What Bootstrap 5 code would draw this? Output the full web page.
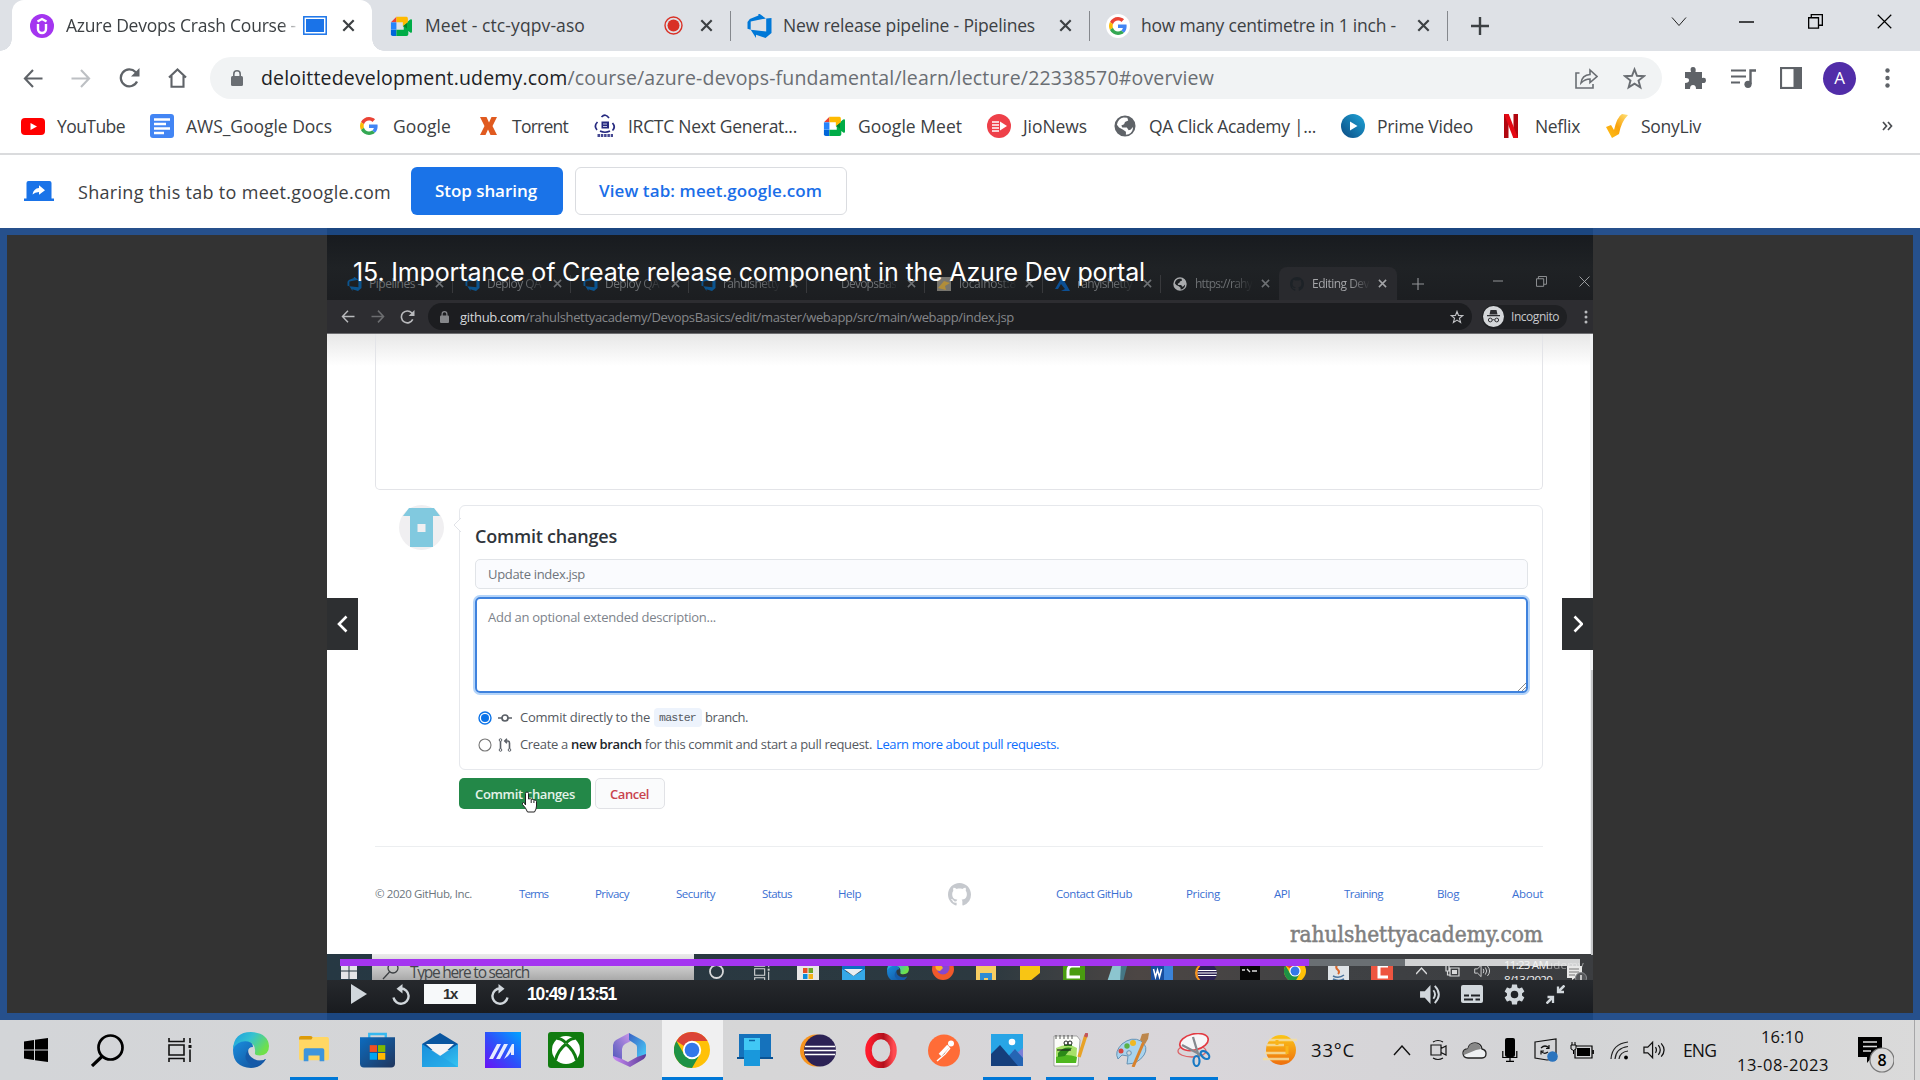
<!DOCTYPE html>
<html lang="en">
<head>
<meta charset="utf-8">
<title>Azure Devops Crash Course</title>
<link href="https://cdn.jsdelivr.net/npm/bootstrap@5.3.0/dist/css/bootstrap.min.css" rel="stylesheet">
<style>
body{width:1920px;height:1080px;overflow:hidden;font-family:"Open Sans","Noto Sans",sans-serif;font-size:17.5px;color:#3c4043;line-height:1.3}
svg{display:block;flex:none}
[data-w]{flex:none}
[data-fit]{white-space:nowrap;display:block}
.bar-row{display:flex;align-items:center;white-space:nowrap}
.tabstrip{height:51px;background:#dee1e6}
.tab-on{height:51px;width:360px;margin-left:12px;padding-left:18px;background:#fff;border-radius:12px 12px 0 0}
.tab-on::before,.tab-on::after{content:"";position:absolute;bottom:0;width:12px;height:12px}
.tab-on::before{left:-12px;background:radial-gradient(circle at 0 0,transparent 11.5px,#fff 12px)}
.tab-on::after{right:-12px;background:radial-gradient(circle at 100% 0,transparent 11.5px,#fff 12px)}
.fade-r{-webkit-mask-image:linear-gradient(90deg,#000 91%,transparent 99%)}
.vsep{border-left:1px solid #85888d;height:30px}
.winbtn{padding-bottom:8px;color:#000}
.toolbar{height:54px;padding-left:23px;color:#5f6368}
.omni{width:1452px;height:42px;border-radius:21px;background:#f1f3f4;padding-left:21px;font-size:19.5px;color:#6a6e73}
.omni b{font-weight:400;color:#202124}
.avatar{width:33px;height:33px;border-radius:50%;background:#512da8;color:#fff;font-size:17px;margin-right:29px}
.marks{height:50px;padding:0 0 6px 21px;border-bottom:2px solid #dadbdd}
.share-row{height:73px;padding:0 0 1px 24px}
.share-row .msg{padding-top:3px;font-size:18px}
.btn-share{height:48px;border-radius:6px;font-size:17px;font-weight:600;padding:0;border:0;line-height:46px}
.btn-stop{width:152px;background:#1a73e8;color:#fff;padding-left:24px}
.btn-view{width:272px;margin-left:12px;background:#fff;border:1px solid #dadce0;color:#1a6ee8;padding-left:23px}
.stage{height:792px;background:#333;border:7px solid #26508c}
.video{width:1266px;height:778px;margin-left:320px;background:#fff}
.vedge{left:0;width:1266px;height:7px;background:#1b4680}
.vedge-t{top:-7px}.vedge-b{top:778px}
.in-tabs{height:65px;padding:32px 0 0 8px;background:linear-gradient(#181b1f,#1f2225 50%,#1c1e21);font-size:12px;color:#77797c}
.in-tab{width:118px;height:33px;padding-left:12px;color:#6d7073}
.in-tab .vsep{border-color:#38393c;height:18px}
.in-fade{-webkit-mask-image:linear-gradient(90deg,#000 55%,transparent 88%)}
.in-on{width:118px;height:33px;padding-left:11px;background:#292a2e;border-radius:8px 8px 0 0;color:#a4a5a8}
.in-bar{height:34px;padding-left:14px;background:#2d2d31;border-bottom:1px solid #6d6d70;color:#b9babd}
.in-omni{width:1044px;height:27px;border-radius:14px;background:#1c1d20;padding:1px 0 0 12px;font-size:13px;color:#85878a}
.in-omni b{font-weight:400;color:#d5d6d8}
.incog{width:85px;height:24px;border-radius:12px;background:#1f2023;font-size:12px;color:#c8c9cc;margin-left:10px;padding-left:1px}
.page-gh{height:620px;background:linear-gradient(#e7e7e7,#fff 32px);padding:0 47px 0 48px;color:#55595f;font-size:13px;border-right:3px solid #f1f2f4}
.editor-end{height:156px;border:1px solid #e3e4e8;border-top:0;border-radius:0 0 5px 5px}
.avatar-row{padding-top:15px}
.cbox{width:1084px;height:265px;border:1px solid #e6e8ec;border-radius:6px;margin-left:15px;padding:17px 14px 0 15px}
.caret{left:-7px;top:12px}
.cbox h3{font-size:18px;font-weight:600;color:#30353b;margin:0;height:36px;line-height:27px}
.inp{height:30px;border:1px solid #e1e4e8;border-radius:5px;background:#fafbfe;padding:1px 0 0 12px;line-height:27px;color:#6f757c}
.txa{height:96px;margin:8px 0 0 0;border:2px solid #3f82dd;box-shadow:0 0 0 2px #b4d4f9;border-radius:5px;padding:10px 0 0 11px;color:#7d838b}
.optrow{height:27px;padding-left:3px}
.opts{padding-top:11px}
.codepill{background:#edf3fc;border-radius:4px;font-family:"Liberation Mono",monospace;font-size:11.5px;height:19px;padding-left:5px;line-height:20px;width:48px;margin-right:3px}
.gbrow{padding:8px 0 0 84px}
.gbtn{height:31px;border-radius:5px;font-size:13px;font-weight:600;padding:0;line-height:30px}
.gb1{width:132px;background:#238848;color:#e4f3e9;padding-left:15px}
.gb2{width:70px;margin-left:4px;background:#fafbfc;border:1px solid #e1e2e6;color:#c9434d;padding-left:14px}
.ghline{border-top:1px solid #eceef0;margin-top:37px}
.ghfoot{height:94px;font-size:11.5px;color:#3a6fd2}
.wm{font-family:"DejaVu Serif Condensed","DejaVu Serif",serif;font-size:22.5px;color:#808080;-webkit-text-stroke:.5px #808080;line-height:30px;margin-left:915px;margin-top:-22px}
.in-task{height:26px;overflow:hidden;background:linear-gradient(90deg,#263843,#2c3940 52%,#4c4644 64%,#3f4144 80%,#3b3d40);padding-left:14px}
.in-task>*{margin-top:9px}
.in-search{width:322px;height:26px;margin-top:0!important;background:linear-gradient(#ececec,#a9a9a9);font-size:15.5px;color:#44474a;padding:11px 0 0 10px}
.prog{left:13px;top:724px;width:1240px;height:7px;background:#d1d2d3}
.prog i{height:7px;display:block}
.p1{width:969px;background:#a435f0}.p2{width:96px;background:#6a6f73}
.ctrl{height:33px;padding:0 0 5px 24px;background:linear-gradient(#26292d,#191b1f);color:#d1d7dc;font-family:"Liberation Sans",sans-serif;font-weight:700}
.speed{width:52px;height:20px;background:#f7f9fa;color:#2d2f31;font-size:15px;padding-left:19px;line-height:20px}
.vtitle{left:26px;top:19px;font-family:"Inter","Liberation Sans",sans-serif;font-size:25px;color:#fff;line-height:36px}
.navb{top:363px;width:31px;height:52px;background:#2d2f31;color:#fff}
.scrollthumb{right:0;top:435px;width:2px;height:285px;background:#c5c6c8}
.hand{left:194px;top:556px}
.ampm{left:1177px;top:722px;width:89px;height:23px;overflow:hidden;color:#f2f2f2;font-size:11.5px;line-height:15px}
.note{left:1240px;top:731px}
.tbar{height:60px;background:linear-gradient(90deg,#d3d5d8,#d6d6d7 40%,#d9d6da 62%,#d3d4d6 82%,#dadada);color:#111}
.cell{width:63px;height:60px;flex:none}
.c62{width:62px}
.cell i{bottom:0;width:48px;height:3px;left:7px;background:#0078d7}
.cell.now{background:#f0f0f1;width:61px;margin:0 1px}.cell.now i{left:0;width:100%}
.temp{font-size:18.5px}
.clock{font-size:16.5px;line-height:28px;padding-top:1px}
.notif{margin-top:10px}
.tedge{border-left:1px solid #a6a6a8;height:60px;width:6px;margin-left:auto}
</style>
</head>
<body>
<svg width="0" height="0" class="position-absolute">
<defs>
<linearGradient id="gEdge" x1="0" y1="0" x2="1" y2=".5"><stop offset="0" stop-color="#1b9de2"/><stop offset=".5" stop-color="#36c2d0"/><stop offset="1" stop-color="#6fe04a"/></linearGradient>
<linearGradient id="gEdge2" x1="0" y1="0" x2="1" y2="1"><stop offset="0" stop-color="#1a8fe0"/><stop offset="1" stop-color="#124b94"/></linearGradient>
<linearGradient id="gStore" x1="0" y1="0" x2="1" y2="1"><stop offset="0" stop-color="#0c6cc0"/><stop offset="1" stop-color="#20355c"/></linearGradient>
<linearGradient id="gMail" x1="0" y1="0" x2="1" y2="1"><stop offset="0" stop-color="#1481d6"/><stop offset="1" stop-color="#35c5f2"/></linearGradient>
<linearGradient id="gAsus" x1="0" y1="1" x2="1" y2="0"><stop offset="0" stop-color="#6a11f5"/><stop offset=".5" stop-color="#2c52fa"/><stop offset="1" stop-color="#00a4ff"/></linearGradient>
<linearGradient id="gPrime" x1="0" y1="1" x2="1" y2="0"><stop offset="0" stop-color="#0b4a82"/><stop offset="1" stop-color="#1fa5d8"/></linearGradient>
<linearGradient id="gSun" x1="0" y1="0" x2="0" y2="1"><stop offset="0" stop-color="#fbc618"/><stop offset="1" stop-color="#ee6e0e"/></linearGradient>
<linearGradient id="gOp" x1="0" y1="0" x2="1" y2="0"><stop offset="0" stop-color="#ff1b2d"/><stop offset=".6" stop-color="#b3101c"/><stop offset="1" stop-color="#ff4a50"/></linearGradient>
<linearGradient id="gSony" x1="0" y1="1" x2="1" y2="0"><stop offset="0" stop-color="#ffc21a"/><stop offset=".5" stop-color="#f9a20a"/><stop offset="1" stop-color="#ffe27a"/></linearGradient>
<linearGradient id="gM1" x1="0" y1="1" x2="1" y2="0"><stop offset="0" stop-color="#4b56b8"/><stop offset="1" stop-color="#d49bee"/></linearGradient>
<linearGradient id="gM2" x1="0" y1="0" x2="1" y2="1"><stop offset="0" stop-color="#3b62c4"/><stop offset="1" stop-color="#49d0fa"/></linearGradient>
<linearGradient id="gM3" x1="0" y1="0" x2="1" y2="0"><stop offset="0" stop-color="#c98bf5"/><stop offset="1" stop-color="#5a3a96"/></linearGradient>
</defs>
<symbol id="meet" viewBox="0 0 24 24"><path fill="#00832d" d="M14 12l5 5 1-5-1-5z"/><path fill="#0066da" d="M1 16v5a2 2 0 0 0 2 2h4v-7z"/><path fill="#e94235" d="M7 2L1 8h6z"/><path fill="#2684fc" d="M1 8h6v8H1z"/><path fill="#00ac47" d="M7 16h8v-4l5 4v5a2 2 0 0 1-2 2H7zM18.500 8L22 5q2-1 2 1v12q0 2-2 1l-3.500-3z"/><path fill="#ffba00" d="M18 2H7v6h7v4l5.500-4V4q0-2-1.500-2z"/></symbol>
<symbol id="goog" viewBox="0 0 48 48"><path fill="#EA4335" d="M24 9.500c3.540 0 6.710 1.220 9.210 3.600l6.850-6.850C35.900 2.380 30.470 0 24 0 14.620 0 6.510 5.380 2.560 13.220l7.980 6.190C12.430 13.720 17.740 9.500 24 9.500z"/><path fill="#4285F4" d="M46.980 24.550c0-1.570-.15-3.090-.38-4.550H24v9.020h12.940c-.58 2.960-2.260 5.480-4.780 7.180l7.730 6c4.510-4.180 7.090-10.360 7.090-17.650z"/><path fill="#FBBC05" d="M10.530 28.590c-.48-1.450-.76-2.990-.76-4.590s.27-3.140.76-4.590l-7.980-6.190C.92 16.460 0 20.120 0 24s.92 7.540 2.560 10.780z"/><path fill="#34A853" d="M24 48c6.480 0 11.930-2.130 15.890-5.810l-7.730-6c-2.150 1.450-4.920 2.300-8.160 2.300-6.260 0-11.570-4.220-13.470-9.910l-7.980 6.190C6.510 42.620 14.620 48 24 48z"/></symbol>
<symbol id="azdo" viewBox="0 0 24 24"><path fill="#0078d7" d="M0 8l2.300-3 8.600-3.500V-1l7.500 5.500L3.200 7.500v8.200L0 14.800zM24 4v15l-6 5-9.500-3.200V24l-5.300-8.300 15.500 1.800V4.500z"/></symbol>
<symbol id="x" viewBox="0 0 12 12"><path d="M1.200 1.200l9.600 9.600M10.800 1.200l-9.600 9.600" stroke="currentColor" stroke-width="2" fill="none"/></symbol>
<symbol id="xt" viewBox="0 0 16 16"><path d="M.8.800l14.400 14.400M15.200.800L.8 15.200" stroke="currentColor" stroke-width="1.300" fill="none"/></symbol>
<symbol id="plus" viewBox="0 0 18 18"><path d="M9 0v18M0 9h18" stroke="currentColor" stroke-width="2.400"/></symbol>
<symbol id="back" viewBox="0 0 20 20"><path d="M10 1L1.500 10l8.500 9M1.500 10H20" stroke="currentColor" stroke-width="2.200" fill="none"/></symbol>
<symbol id="rel" viewBox="0 0 20 20"><path d="M17.500 13.500A8.500 8.500 0 1 1 16 4l2 2" stroke="currentColor" stroke-width="2.300" fill="none"/><path d="M20 0v8.500h-8.500z" fill="currentColor"/></symbol>
<symbol id="lock" viewBox="0 0 12 16"><path fill="currentColor" d="M1.500 6H10.500Q12 6 12 7.500v7Q12 16 10.500 16h-9Q0 16 0 14.500v-7Q0 6 1.500 6z"/><path d="M2.800 7V4a3.200 3.200 0 0 1 6.400 0v3" stroke="currentColor" stroke-width="1.600" fill="none"/></symbol>
<symbol id="star" viewBox="0 0 24 24"><path d="M12 2.500l2.600 6.700 7.200.4-5.600 4.600 1.900 7-6.100-3.900-6.100 3.900 1.900-7-5.600-4.600 7.200-.4z" stroke="currentColor" stroke-width="2" fill="none"/></symbol>
<symbol id="globe" viewBox="0 0 24 24"><path fill="currentColor" fill-rule="evenodd" d="M12 .5a11.500 11.500 0 1 0 0 23a11.500 11.500 0 1 0 0-23zM14.500 3l1 3-3.500 1.500-1 2.500-3 1.500 1 2h5l2 3 2-.5 2.700-3q.3 5.500-4.700 8l-3 .6v-3.300L10 16l-4.500-2.500-2.300-3Q4.500 4 10.500 2.800z"/></symbol>
<symbol id="cat" viewBox="0 0 16 16"><path fill="currentColor" d="M8 0C3.580 0 0 3.580 0 8c0 3.540 2.290 6.530 5.470 7.590.4.070.55-.17.55-.38 0-.19-.01-.82-.01-1.490-2.010.37-2.530-.49-2.690-.94-.09-.23-.48-.94-.82-1.130-.28-.15-.68-.52-.01-.53.63-.01 1.080.58 1.230.82.72 1.210 1.870.87 2.330.66.07-.52.28-.87.51-1.070-1.780-.2-3.640-.89-3.640-3.950 0-.87.31-1.590.82-2.150-.08-.2-.36-1.020.08-2.120 0 0 .67-.21 2.200.82.64-.18 1.320-.27 2-.27s1.360.09 2 .27c1.530-1.040 2.200-.82 2.200-.82.44 1.100.16 1.920.08 2.120.51.56.82 1.270.82 2.150 0 3.070-1.870 3.750-3.650 3.950.29.25.54.73.54 1.480 0 1.070-.01 1.930-.01 2.200 0 .21.15.46.55.38A8.010 8.010 0 0 0 16 8c0-4.420-3.580-8-8-8z"/></symbol>
<symbol id="win" viewBox="0 0 24 24"><path fill="currentColor" d="M0 3.400L10 2v9.400H0zM11 1.800L24 0v11.400H11zM0 12.600h10V22L0 20.600zM11 12.600h13V24l-13-1.800z"/></symbol>
<symbol id="tv" viewBox="0 0 24 24"><path d="M1 0v3.500h15V0M1 24v-3.500h15V24M1 7h15v10H1zM22 0v5M22 11.500V24" stroke="currentColor" stroke-width="1.600" fill="none"/><path fill="currentColor" d="M20.500 7h3v3h-3z"/></symbol>
<symbol id="edge" viewBox="0 0 36 36"><path fill="url(#gEdge2)" d="M0 18Q0 8 10 8q10 0 10 7-5 0-5 5 0 8 10 9 5 0 8-2-5 9-15 9Q0 35 0 18z"/><path fill="url(#gEdge)" d="M0 17Q1 0 18 0q17 1 18 14 0 9-9 9.500-6 0-5-3 1-9-7-11Q5 8 0 17z"/><path fill="#155aa8" d="M15 18q-6 8 2 14 9 5 16-5-6 3-12 0-6-3-6-9z"/></symbol>
<symbol id="chrome" viewBox="0 0 36 36"><circle cx="18" cy="18" r="18" fill="#ffc107"/><path fill="#db4437" d="M2.400 9A18 18 0 0 1 33.600 9H18L10 14z"/><path fill="#1e9245" d="M2.400 9A18 18 0 0 0 18 36l7.800-13.500L18 26l-8-4z"/><circle cx="18" cy="18" r="9.200" fill="#fff"/><circle cx="18" cy="18" r="7.300" fill="#3478e8"/></symbol>
<symbol id="fold" viewBox="0 0 32 30"><path fill="#dd9b07" d="M0 2q0-2 2-2h10q3 0 3 4H0z"/><path fill="#ffd764" d="M0 4h13l2-3h15q2 0 2 2v21q0 2-2 2H2q-2 0-2-2z"/><path fill="#3d95dc" d="M5 15q0-2 2-2h18q2 0 2 2v12h-5v-6h-12v6H5z"/></symbol>
<symbol id="store" viewBox="0 0 36 36"><path d="M9.500 7V1.500h17V7" fill="none" stroke="#37b9f0" stroke-width="2.400"/><path fill="url(#gStore)" d="M0 5h36v27q0 4-4 4H4q-4 0-4-4z"/><path fill="#f25022" d="M10 13h7.500v7H10z"/><path fill="#7fba00" d="M18.500 13H26v7h-7.500z"/><path fill="#00a4ef" d="M10 21h7.500v7H10z"/><path fill="#ffb900" d="M18.500 21H26v7h-7.500z"/></symbol>
<symbol id="mail" viewBox="0 0 36 34"><path fill="#0a56a0" d="M0 11L18 0l18 11v6H0z"/><path fill="#f4f4f6" d="M4 11h28L18 24z"/><path fill="url(#gMail)" d="M0 11l18 12 18-12v23H0z"/><path fill="#1f9fe4" d="M0 11l36 23H0z" opacity=".5"/></symbol>
<symbol id="ecl" viewBox="0 0 36 32"><circle cx="16" cy="16" r="16" fill="#f7941e"/><circle cx="20" cy="16" r="16" fill="#2c2255"/><path d="M5 12h30M4 16h32M5 20h30" stroke="#fff" stroke-width="1.700"/></symbol>
<symbol id="vol" viewBox="0 0 22 20"><path fill="currentColor" d="M0 6.500h5L11 0v20l-6-6.500H0z"/><path d="M14 5.500q3.500 4.500 0 9M15.500 1q8.500 9 0 18" stroke="currentColor" stroke-width="2" fill="none"/></symbol>
<symbol id="vol2" viewBox="0 0 24 20"><path d="M1 7h4l5-5v16l-5-5H1zM13 7q2 3 0 6M16 5q4 5 0 10M19 3q6 7 0 14" stroke="currentColor" stroke-width="1.300" fill="none"/></symbol>
<symbol id="rest" viewBox="0 0 16 16"><path d="M.7 4h10.500v11H.7zM3.500 4V.7h11.800V12h-4" stroke="currentColor" stroke-width="1.400" fill="none"/></symbol>
<symbol id="rot" viewBox="0 0 18 21"><path d="M9 4.500a7.600 7.600 0 1 1-7.500 9" stroke="currentColor" stroke-width="2.400" fill="none"/><path fill="currentColor" d="M10.500 0v9.500L4.500 4.700z"/></symbol>
</svg>

<div class="bar-row tabstrip">
  <div class="bar-row tab-on position-relative">
    <span data-w="36"><svg width="24" height="24" viewBox="0 0 24 24"><circle cx="12" cy="12" r="12" fill="#a435f0"/><path d="M8 10v5a4 4 0 0 0 8 0v-5M7.500 7.500L12 5l4.500 2.500" stroke="#fff" stroke-width="2.400" fill="none"/></svg></span>
    <span data-w="237" class="fade-r" data-fit="230">Azure Devops Crash Course -</span>
    <span data-w="39"><svg width="24" height="19"><rect x=".8" y=".8" width="22.400" height="17.400" fill="#fff" stroke="#1a73e8" stroke-width="1.500"/><rect x="3" y="3" width="18" height="13" fill="#1a73e8"/></svg></span>
    <svg width="13" height="13"><use href="#x"/></svg>
  </div>
  <span data-w="18"></span>
  <span data-w="35"><svg width="22" height="22"><use href="#meet"/></svg></span>
  <span data-w="239" data-fit="160">Meet - ctc-yqpv-aso</span>
  <span data-w="36"><svg width="19" height="19"><circle cx="9.500" cy="9.500" r="8.500" fill="none" stroke="#d93025" stroke-width="1.400"/><circle cx="9.500" cy="9.500" r="6" fill="#d93025"/></svg></span>
  <span data-w="30"><svg width="13" height="13"><use href="#x"/></svg></span>
  <span data-w="17" class="vsep"></span>
  <span data-w="36"><svg width="25" height="24" overflow="visible"><use href="#azdo"/></svg></span>
  <span data-w="276" data-fit="252">New release pipeline - Pipelines</span>
  <span data-w="30"><svg width="13" height="13"><use href="#x"/></svg></span>
  <span data-w="17" class="vsep"></span>
  <span data-w="35"><svg width="24" height="24"><circle cx="12" cy="12" r="12" fill="#fff"/><use href="#goog" x="3" y="3" width="18" height="18"/></svg></span>
  <span data-w="276" data-fit="255">how many centimetre in 1 inch -</span>
  <span data-w="30"><svg width="13" height="13"><use href="#x"/></svg></span>
  <span data-w="24" class="vsep"></span>
  <span data-w="200"><svg width="18" height="18"><use href="#plus"/></svg></span>
  <span data-w="68" class="winbtn"><svg width="16" height="9"><path d="M1 .5l7 8 7-8" stroke="#222" fill="none"/></svg></span>
  <span data-w="69" class="winbtn"><svg width="15" height="2"><path d="M0 1h15" stroke="#000" stroke-width="1.400"/></svg></span>
  <span data-w="69" class="winbtn"><svg width="15" height="15"><use href="#rest"/></svg></span>
  <span data-w="42" class="winbtn"><svg width="15" height="15"><use href="#xt"/></svg></span>
</div>

<div class="bar-row toolbar">
  <span data-w="48"><svg width="20" height="19"><use href="#back"/></svg></span>
  <span data-w="48"><svg width="20" height="19"><g color="#bdc0c4" transform="translate(20 0) scale(-1 1)"><use href="#back"/></g></svg></span>
  <span data-w="49"><svg width="21" height="20"><use href="#rel"/></svg></span>
  <span data-w="42"><svg width="19" height="20" viewBox="0 0 19 20"><path d="M1 9.500L9.500 1.500l8.500 8M3.500 8v10.800h12V8" stroke="currentColor" stroke-width="2.100" fill="none"/></svg></span>
  <div class="bar-row omni">
    <span data-w="30"><svg width="12" height="16"><use href="#lock"/></svg></span>
    <span data-w="1314" data-fit="953"><b>deloittedevelopment.udemy.com</b>/course/azure-devops-fundamental/learn/lecture/22338570#overview</span>
    <span data-w="48"><svg width="23" height="21" viewBox="0 0 23 21"><path d="M4.500 5H1v15h17v-4M6 15Q7 7 15 6.500V2l7 6.500-7 6V11q-5 0-9 4z" stroke="currentColor" stroke-width="1.600" fill="none"/></svg></span>
    <svg width="23" height="23"><use href="#star"/></svg>
  </div>
  <span data-w="22"></span>
  <span data-w="47"><svg width="22" height="22" viewBox="0 0 22 22"><path fill="currentColor" d="M1 5h6q-1.500-5 2-5t2.500 5H18v6q4-1 4 2.200T18 16v6h-6q0-4-3-4t-3 4H1v-6q4 0 4-2.700T1 11z"/></svg></span>
  <span data-w="49"><svg width="25" height="19" viewBox="0 0 25 19"><path d="M0 1.500h15M0 7.500h15M0 13.500h9" stroke="currentColor" stroke-width="2.200"/><path d="M19.500 15V1.500H25" stroke="currentColor" stroke-width="2.400" fill="none"/><circle cx="17" cy="15.300" r="3.600" fill="currentColor"/></svg></span>
  <span data-w="43"><svg width="22" height="22"><rect x="1" y="1" width="20" height="20" fill="#fff" stroke="#5f6368" stroke-width="2.200"/><path fill="#5f6368" d="M13.500 0H22v22h-8.500z"/></svg></span>
  <div class="avatar d-flex align-items-center justify-content-center">A</div>
  <svg width="5" height="20" viewBox="0 0 5 20"><circle cx="2.500" cy="2.500" r="2.200" fill="currentColor"/><circle cx="2.500" cy="10" r="2.200" fill="currentColor"/><circle cx="2.500" cy="17.500" r="2.200" fill="currentColor"/></svg>
</div>

<div class="bar-row marks">
  <span data-w="36"><svg width="24" height="17"><rect width="24" height="17" rx="4" fill="#f00"/><path fill="#fff" d="M9.500 5v7l6.500-3.500z"/></svg></span>
  <span data-w="93" data-fit="68">YouTube</span>
  <span data-w="36"><svg width="24" height="24"><rect width="24" height="24" rx="3" fill="#4285f4"/><path d="M4 5.500h16M4 10h12M4 14.500h16M4 19h10" stroke="#fff" stroke-width="2.300"/></svg></span>
  <span data-w="174" data-fit="146">AWS_Google Docs</span>
  <span data-w="33"><svg width="18" height="18"><use href="#goog"/></svg></span>
  <span data-w="87" data-fit="58">Google</span>
  <span data-w="32"><svg width="17" height="18" viewBox="0 0 17 18"><path fill="#e05a1f" d="M0 0h6.500L9 5.500 11.500 0H17l-4.500 9L17 18h-6.500L8 12.500 5.500 18H0l4.500-9z"/></svg></span>
  <span data-w="82" data-fit="56">Torrent</span>
  <span data-w="34"><svg width="22" height="24" viewBox="0 0 22 24"><path d="M7.500 3q4-4 7.500 1M3.500 8Q-.500 12 3 16M18.500 9q3.500 4 0 7.500M6 17q5 2.500 10 0" stroke="#262a80" stroke-width="1.700" fill="none"/><path fill="#262a80" d="M7.500 7.500h7.500v7H7.500z"/><path d="M9 10h4M9 12.500h4" stroke="#c5c7e0" stroke-width="1"/><path d="M3.500 21.500h15.500" stroke="#262a80" stroke-width="3" stroke-dasharray="2.500 .8" opacity=".85"/></svg></span>
  <span data-w="195" data-fit="169">IRCTC Next Generat...</span>
  <span data-w="35"><svg width="22" height="22"><use href="#meet"/></svg></span>
  <span data-w="129" data-fit="104">Google Meet</span>
  <span data-w="36"><svg width="24" height="24"><circle cx="12" cy="12" r="12" fill="#ee4049"/><path d="M5 8h7M5 11h7M5 14h7M5 17h7" stroke="#fff" stroke-width="1.600"/><path fill="#fff" d="M13 7.500v9l7-4.500z"/></svg></span>
  <span data-w="91" data-fit="64">JioNews</span>
  <span data-w="35"><svg width="22" height="22" color="#5f6368"><use href="#globe"/></svg></span>
  <span data-w="192" data-fit="167">QA Click Academy |...</span>
  <span data-w="36"><svg width="24" height="24"><circle cx="12" cy="12" r="12" fill="url(#gPrime)"/><path fill="#fff" d="M9 7.500v9l7.500-4.500z"/></svg></span>
  <span data-w="127" data-fit="96">Prime Video</span>
  <span data-w="31"><svg width="14" height="24"><path fill="#b1060f" d="M0 0h4.500v24H0zM9.500 0H14v24H9.500z"/><path fill="#e50914" d="M0 0h4.700L14 24H9.300z"/></svg></span>
  <span data-w="71" data-fit="45">Neflix</span>
  <span data-w="35"><svg width="22" height="24" viewBox="0 0 22 24"><path fill="url(#gSony)" d="M0 13l5-2 3 5Q11 3 16 0l6 1Q15 8 13 20l-7 4z"/></svg></span>
  <span data-w="241" data-fit="60">SonyLiv</span>
  <svg width="11" height="10"><path d="M1 1l3.500 4L1 9M6 1l3.500 4L6 9" stroke="#4a4d51" stroke-width="1.700" fill="none"/></svg>
</div>

<div class="bar-row share-row">
  <span data-w="54"><svg width="30" height="20"><path fill="#1a73e8" d="M4.500 0h21q2 0 2 2v15.500H30V20H0v-2.500h2.500V2q0-2 2-2z"/><path fill="#fff" d="M8.500 13.500Q9.500 7.500 15 7V4.200l6 5-6 4.500V11q-4 0-6.500 2.500z"/></svg></span>
  <span data-w="333" data-fit="313" class="msg">Sharing this tab to meet.google.com</span>
  <button class="btn btn-share btn-stop text-start"><span data-fit="102">Stop sharing</span></button>
  <button class="btn btn-share btn-view text-start"><span data-fit="223">View tab: meet.google.com</span></button>
</div>

<div class="stage">
  <div class="video position-relative">
    <div class="bar-row in-tabs">
      <div class="bar-row in-tab"><span data-w="22"><svg width="15" height="14" overflow="visible" opacity=".6"><use href="#azdo"/></svg></span><span data-w="66" data-fit="52">Pipelines -</span><span data-w="17"><svg width="9" height="9"><use href="#x"/></svg></span><span class="vsep"></span></div>
      <div class="bar-row in-tab"><span data-w="22"><svg width="15" height="14" overflow="visible" opacity=".6"><use href="#azdo"/></svg></span><span data-w="66" data-fit="54" class="in-fade">Deploy QA</span><span data-w="17"><svg width="9" height="9"><use href="#x"/></svg></span><span class="vsep"></span></div>
      <div class="bar-row in-tab"><span data-w="22"><svg width="15" height="14" overflow="visible" opacity=".6"><use href="#azdo"/></svg></span><span data-w="66" data-fit="54" class="in-fade">Deploy QA</span><span data-w="17"><svg width="9" height="9"><use href="#x"/></svg></span><span class="vsep"></span></div>
      <div class="bar-row in-tab"><span data-w="22"><svg width="15" height="14" overflow="visible" opacity=".6"><use href="#azdo"/></svg></span><span data-w="66" data-fit="57" class="in-fade">rahulshetty</span><span data-w="17"><svg width="9" height="9"><use href="#x"/></svg></span><span class="vsep"></span></div>
      <div class="bar-row in-tab"><span data-w="22"></span><span data-w="66" data-fit="55" class="in-fade">DevopsBas</span><span data-w="17"><svg width="9" height="9"><use href="#x"/></svg></span><span class="vsep"></span></div>
      <div class="bar-row in-tab"><span data-w="22"><svg width="14" height="14"><rect width="14" height="14" fill="#77756e"/><path fill="#b08d3a" d="M1 11l6-7 6 2-5 3 1 4z"/></svg></span><span data-w="66" data-fit="57" class="in-fade">localhost:8</span><span data-w="17"><svg width="9" height="9"><use href="#x"/></svg></span><span class="vsep"></span></div>
      <div class="bar-row in-tab"><span data-w="22"><svg width="15" height="14"><path fill="#0c4f93" d="M0 12L7 0l8 14H6l4-2-4-5-3 5z"/></svg></span><span data-w="66" data-fit="55" class="in-fade">rahylshetty</span><span data-w="17"><svg width="9" height="9"><use href="#x"/></svg></span><span class="vsep"></span></div>
      <div class="bar-row in-tab"><span data-w="22"><svg width="14" height="14" color="#a9abad"><use href="#globe"/></svg></span><span data-w="66" data-fit="57" class="in-fade">https://rahy</span><svg width="9" height="9"><use href="#x"/></svg></div>
      <div class="bar-row in-on"><span data-w="22"><svg width="14" height="14" color="#1d2227"><use href="#cat"/></svg></span><span data-w="66" data-fit="57" class="in-fade">Editing Dev</span><svg width="9" height="9"><use href="#x"/></svg></div>
      <span data-w="15"></span>
      <span data-w="81"><svg width="12" height="12" viewBox="0 0 18 18"><path d="M9 0v18M0 9h18" stroke="#929497" stroke-width="1.700"/></svg></span>
      <span data-w="43"><svg width="10" height="7"><path d="M0 1h10" stroke="#929497"/></svg></span>
      <span data-w="43"><svg width="11" height="16"><g color="#929497"><use href="#rest" width="11" height="11"/></g></svg></span>
      <svg width="11" height="16"><g color="#a9abad"><use href="#xt" width="11" height="11"/></g></svg>
    </div>
    <div class="bar-row in-bar">
      <span data-w="30"><svg width="14" height="13"><use href="#back"/></svg></span>
      <span data-w="29"><svg width="14" height="13" viewBox="0 0 20 20"><path d="M10 1l8.500 9-8.500 9M18.500 10H0" stroke="#6c6d70" stroke-width="2.400" fill="none"/></svg></span>
      <span data-w="28"><svg width="15" height="14"><use href="#rel"/></svg></span>
      <div class="bar-row in-omni">
        <span data-w="20"><svg width="9" height="12"><use href="#lock"/></svg></span>
        <span data-w="990" data-fit="554"><b>github.com</b>/rahulshettyacademy/DevopsBasics/edit/master/webapp/src/main/webapp/index.jsp</span>
        <svg width="14" height="14" color="#c0c1c4"><use href="#star"/></svg>
      </div>
      <div class="bar-row incog"><span data-w="28"><svg width="21" height="21"><circle cx="10.500" cy="10.500" r="10.500" fill="#d5d7da"/><path fill="#2d2d31" d="M7.500 4h6l1 4.500h-8zM4 9h13v1.300H4z"/><path d="M9.300 14q1.200-.8 2.400 0" stroke="#2d2d31" fill="none"/><circle cx="7.300" cy="14" r="1.900" fill="none" stroke="#2d2d31"/><circle cx="13.700" cy="14" r="1.900" fill="none" stroke="#2d2d31"/></svg></span><span data-fit="48">Incognito</span></div>
      <span data-w="17"></span>
      <svg width="4" height="14"><circle cx="2" cy="2" r="1.500" fill="#b9babd"/><circle cx="2" cy="7" r="1.500" fill="#b9babd"/><circle cx="2" cy="12" r="1.500" fill="#b9babd"/></svg>
    </div>
    <div class="page-gh">
      <div class="editor-end"></div>
      <div class="d-flex avatar-row">
        <span data-w="24"></span>
        <svg width="45" height="45" viewBox="0 0 45 45"><circle cx="22.500" cy="22.500" r="22.500" fill="#f0eff1"/><path fill="#81c9df" d="M10 3h25l6 8h-7v31H11V11H4z"/><path fill="#f0eff1" d="M18.500 19h8v8h-8z"/></svg>
        <div class="cbox position-relative">
          <svg class="caret position-absolute" width="8" height="14"><path d="M8 0L1 7l7 7" fill="#fff" stroke="#e1e3e8"/></svg>
          <h3><span class="d-inline-block" data-fit="142">Commit changes</span></h3>
          <div class="inp"><span data-fit="97">Update index.jsp</span></div>
          <div class="txa position-relative"><span data-fit="228">Add an optional extended description...</span><svg class="position-absolute bottom-0 end-0" width="9" height="9"><path d="M1 9l8-8M5 9l4-4" stroke="#888"/></svg></div>
          <div class="opts">
          <div class="bar-row optrow">
            <span data-w="20"><svg width="14" height="14"><circle cx="7" cy="7" r="6" fill="#fff" stroke="#0b73e8" stroke-width="1.400"/><circle cx="7" cy="7" r="4" fill="#0b73e8"/></svg></span>
            <span data-w="22"><svg width="14" height="10"><circle cx="7" cy="5" r="3" fill="none" stroke="#5b6067" stroke-width="1.700"/><path d="M0 5h4M10 5h4" stroke="#5b6067" stroke-width="1.700"/></svg></span>
            <span data-w="134" data-fit="130">Commit directly to the</span>
            <span class="codepill"><span data-fit="37">master</span></span>
            <span data-fit="43">branch.</span>
          </div>
          <div class="bar-row optrow">
            <span data-w="20"><svg width="14" height="14"><circle cx="7" cy="7" r="6" fill="#fff" stroke="#777" stroke-width="1.100"/></svg></span>
            <span data-w="22"><svg width="14" height="14" viewBox="0 0 14 14"><path d="M2.500 3v8M11.500 11V5q0-2-2-2H7M9 .8L6.800 3 9 5.200" stroke="#5b6067" stroke-width="1.600" fill="none"/><circle cx="2.500" cy="2" r="1.300" fill="#fff" stroke="#5b6067"/><circle cx="2.500" cy="12" r="1.300" fill="#fff" stroke="#5b6067"/><circle cx="11.500" cy="12" r="1.300" fill="#fff" stroke="#5b6067"/></svg></span>
            <span data-w="356" data-fit="352">Create a <span class="fw-semibold text-dark">new branch</span> for this commit and start a pull request.</span>
            <span class="text-primary" data-fit="183">Learn more about pull requests.</span>
          </div>
          </div>
        </div>
      </div>
      <div class="d-flex gbrow">
        <button class="btn gbtn gb1 text-start"><span data-fit="100">Commit changes</span></button>
        <button class="btn gbtn gb2 text-start"><span data-fit="39">Cancel</span></button>
      </div>
      <div class="ghline"></div>
      <div class="bar-row ghfoot">
        <span data-w="144" data-fit="97" class="text-secondary">© 2020 GitHub, Inc.</span>
        <span data-w="76" data-fit="29">Terms</span><span data-w="81" data-fit="34">Privacy</span><span data-w="86" data-fit="39">Security</span><span data-w="76" data-fit="30">Status</span><span data-w="110" data-fit="23">Help</span>
        <span data-w="108"><svg width="23" height="23" color="#c6c9ce"><use href="#cat"/></svg></span>
        <span data-w="130" data-fit="76">Contact GitHub</span><span data-w="88" data-fit="34">Pricing</span><span data-w="70" data-fit="16">API</span><span data-w="93" data-fit="39">Training</span><span data-w="75" data-fit="22">Blog</span><span data-w="31" data-fit="31">About</span>
      </div>
      <div class="wm"><span data-fit="253">rahulshettyacademy.com</span></div>
    </div>
    <div class="d-flex in-task">
      <span data-w="31"><svg width="16" height="16" color="#e4e6e8" viewBox="0 0 16 16"><path fill="currentColor" d="M0 0h7.500v7.500H0zM8.500 0H16v7.500H8.500zM0 8.500h7.500V16H0zM8.500 8.500H16V16H8.500z"/></svg></span>
      <div class="d-flex in-search"><span data-w="28"><svg width="17" height="16" viewBox="0 0 17 16" overflow="visible"><circle cx="11" cy="3" r="5" fill="none" stroke="#3c3f42" stroke-width="1.300"/><path d="M7.500 7L1 14" stroke="#3c3f42" stroke-width="1.300"/></svg></span><span data-fit="119" class="lh-1">Type here to search</span></div>
      <span data-w="15"></span>
      <span data-w="45"><svg width="15" height="17"><circle cx="7.500" cy="8.500" r="6.500" fill="none" stroke="#d8d9da" stroke-width="1.800"/></svg></span>
      <span data-w="43"><svg width="16" height="18" color="#d8d9da"><use href="#tv"/></svg></span>
      <span data-w="45"><svg width="22" height="18"><path fill="#e7e7e7" d="M0 3h22v15H0z"/><path fill="#e34f26" d="M6 5h4.500v5H6z"/><path fill="#6aa52a" d="M11.500 5H16v5h-4.500z"/><path fill="#0a8bdb" d="M6 11h4.500v5H6z"/><path fill="#f2b118" d="M11.500 11H16v5h-4.500z"/></svg></span>
      <span data-w="45"><svg width="23" height="19"><path fill="#0c6fc0" d="M0 2h23v6H0z"/><path fill="#35a9e8" d="M0 6l11.500 7L23 6v13H0z"/><path fill="#e9eef2" d="M2 6h19l-9.500 7z"/></svg></span>
      <span data-w="45"><svg width="22" height="22"><use href="#edge" y="-3"/></svg></span>
      <span data-w="44"><svg width="22" height="22"><circle cx="11" cy="6" r="11" fill="#f0592b"/><circle cx="11" cy="5" r="6.500" fill="#8548d0"/><path fill="#fbb02a" d="M4 0q4 0 7 5l-3 3q-6 0-4-8z"/></svg></span>
      <span data-w="44"><svg width="20" height="20"><path fill="#f6cd63" d="M0 2h20v18H0z"/><path fill="#2f8bd2" d="M4 10h12v10h-4v-5H8v5H4z"/></svg></span>
      <span data-w="43"><svg width="20" height="19"><path fill="#f8c514" d="M0 0h20v19H0z"/><path fill="#3b3a36" d="M10 18l10-8v9H10z"/></svg></span>
      <span data-w="44"><svg width="22" height="19"><path fill="#499c10" d="M0 0h22v19H0z"/><path d="M17 3H9Q5 3 5 8v6h12" stroke="#fff" stroke-width="3" fill="none"/></svg></span>
      <span data-w="44"><svg width="22" height="19"><path fill="#8cc5cf" d="M6 1h14l-6 18H0z"/><path fill="#457785" d="M14 1l6 2-4 16h-3z"/></svg></span>
      <span data-w="44"><svg width="22" height="19"><path fill="#3b83d8" d="M5 0h17v19H5z"/><path fill="#184e9e" d="M0 3h13v14H0z"/><path d="M2.500 6l2 8 2-7 2 7 2-8" stroke="#fff" stroke-width="1.500" fill="none"/></svg></span>
      <span data-w="45"><svg width="22" height="20"><use href="#ecl"/></svg></span>
      <span data-w="44"><svg width="20" height="19"><path fill="#060606" d="M0 2h20v17H0z"/><path d="M2 7h3M7 6l3 3M12 8h5" stroke="#ddd" stroke-width="1.400"/></svg></span>
      <span data-w="44"><svg width="22" height="22"><use href="#chrome" y="-3"/></svg></span>
      <span data-w="43"><svg width="21" height="19"><path fill="#dfe4e8" d="M0 0h21v19H0z"/><path d="M11 0q-5 4-1 7 2 2 0 4" stroke="#d8662a" stroke-width="2" fill="none"/><path d="M5 13q6 3 11-1M5 16q6 3 11 0" stroke="#47719b" stroke-width="1.600" fill="none"/></svg></span>
      <span data-w="45"><svg width="22" height="19"><path fill="#ee5540" d="M0 0h22v19H0z"/><path d="M17 3H8v11h9" stroke="#fff" stroke-width="3" fill="none"/></svg></span>
      <span data-w="29"><svg width="11" height="16"><path d="M0 11l5.500-6L11 11" stroke="#d8d9da" stroke-width="1.500" fill="none"/></svg></span>
      <span data-w="29"><svg width="15" height="15"><path d="M5 5h9v8H5zM1 3v5h3V3M2.500 8v4H5" stroke="#d8d9da" stroke-width="1.200" fill="none"/><path fill="#d8d9da" d="M7 7h5v4H7z"/></svg></span>
      <svg width="17" height="16" color="#d8d9da"><use href="#vol2"/></svg>
    </div>
    <div class="bar-row ctrl">
      <span data-w="41"><svg width="16" height="20"><path fill="currentColor" d="M0 0l16 10L0 20z"/></svg></span>
      <span data-w="32"><svg width="18" height="21"><use href="#rot"/></svg></span>
      <span class="speed"><span data-fit="14">1x</span></span>
      <span data-w="15"></span>
      <span data-w="36"><svg width="18" height="21"><g transform="translate(18 0) scale(-1 1)"><use href="#rot"/></g></svg></span>
      <span data-w="893" data-fit="89" class="text-white">10:49 / 13:51</span>
      <span data-w="41"><svg width="21" height="19"><use href="#vol"/></svg></span>
      <span data-w="43"><svg width="22" height="18"><rect width="22" height="18" rx="2" fill="currentColor"/><path d="M3 10.500h5M10 10.500h9M3 14.500h9M14.500 14.500H19" stroke="#202327" stroke-width="1.800"/></svg></span>
      <span data-w="42"><svg width="21" height="21" viewBox="2 2 20 20"><path fill="currentColor" d="M19.140 12.940c.04-.3.060-.61.060-.94s-.02-.64-.07-.94l2.030-1.580c.18-.14.23-.41.12-.61l-1.920-3.320c-.12-.22-.37-.29-.59-.22l-2.390.96c-.5-.38-1.030-.7-1.620-.94L14.400 2.810a.48.480 0 0 0-.48-.41h-3.840c-.24 0-.43.17-.47.41L9.250 5.350c-.59.24-1.130.57-1.620.94l-2.390-.96c-.22-.08-.47 0-.59.22L2.740 8.870c-.12.21-.08.47.12.610l2.030 1.580c-.05.3-.09.63-.09.94s.02.64.07.94l-2.030 1.580c-.18.14-.23.41-.12.61l1.920 3.320c.12.22.37.29.59.22l2.390-.96c.5.38 1.030.7 1.620.94l.36 2.540c.05.24.24.41.48.41h3.840c.24 0 .44-.17.47-.41l.36-2.540c.59-.24 1.130-.56 1.620-.94l2.390.96c.22.080.47 0 .59-.22l1.920-3.320c.12-.22.070-.47-.12-.61zM12 15.600A3.600 3.600 0 1 1 12 8.400a3.600 3.600 0 0 1 0 7.200z"/></svg></span>
      <svg width="19" height="19"><path d="M18.500.5l-6 6M.5 18.500l6-6" stroke="currentColor" stroke-width="2.600"/><path d="M12 1.500V7h6M1.500 12H7v6" stroke="currentColor" stroke-width="2.300" fill="none"/></svg>
    </div>
    <div class="prog position-absolute d-flex"><i class="p1"></i><i class="p2"></i></div>
    <div class="ampm position-absolute"><div class="d-flex"><span data-w="42" data-fit="44">11:23 AM</span><span class="opacity-50" data-fit="38">udemy</span></div><span data-fit="48">8/13/2020</span></div>
    <svg class="note position-absolute" width="22" height="14"><path fill="#e8e8e8" d="M0 0h15v12H8l-3 2v-2H0z"/><path d="M2 3h10M2 6h10M2 9h6" stroke="#777"/><circle cx="14" cy="12" r="5.500" fill="#55575a" stroke="#8a8c8f"/><path d="M14 9v5" stroke="#fff" stroke-width="1.300"/></svg>
    <div class="vtitle position-absolute"><span data-fit="792">15. Importance of Create release component in the Azure Dev portal</span></div>
    <div class="navb position-absolute start-0 d-flex align-items-center justify-content-center"><svg width="14" height="18"><path d="M10.500 1.500L3 9l7.500 7.500" stroke="#fff" stroke-width="2.600" fill="none"/></svg></div>
    <div class="navb position-absolute end-0 d-flex align-items-center justify-content-center"><svg width="10" height="18"><path d="M1.500 1.500L9 9l-7.500 7.500" stroke="#fff" stroke-width="2.600" fill="none"/></svg></div>
    <div class="scrollthumb position-absolute"></div>
    <svg class="hand position-absolute" width="17" height="22" viewBox="0 0 17 22"><path fill="#fff" stroke="#222" d="M4.500 14V2.500Q4.500 1 6 1t1.500 1.500V8q2-1 2.800.5 2-.8 2.600.6 2.300-.6 2.600 1.400V15q0 3-2 6H6.500Q5 17 1.500 13.500 1 11.500 2.500 11.500q1 0 2 2.500z"/><path d="M10.200 9v3M12.900 9.500V12" stroke="#222"/></svg>
    <div class="vedge vedge-t position-absolute"></div><div class="vedge vedge-b position-absolute"></div>
  </div>
</div>

<div class="bar-row tbar">
  <span data-w="24"></span>
  <span data-w="67"><svg width="24" height="24" color="#000"><use href="#win"/></svg></span>
  <span data-w="77"><svg width="33" height="33" viewBox="0 0 33 33"><circle cx="19.500" cy="13.500" r="12" fill="none" stroke="#000" stroke-width="2.700"/><path d="M11 22.500L1 32" stroke="#000" stroke-width="3.200"/></svg></span>
  <span data-w="51.500"><svg width="24" height="24" color="#111"><use href="#tv"/></svg></span>
  <div class="cell d-flex align-items-center justify-content-center"><svg width="36" height="36"><use href="#edge"/></svg></div>
  <div class="cell position-relative d-flex align-items-center justify-content-center"><svg width="32" height="28"><use href="#fold"/></svg><i class="position-absolute"></i></div>
  <div class="cell d-flex align-items-center justify-content-center"><svg width="35" height="36"><use href="#store"/></svg></div>
  <div class="cell d-flex align-items-center justify-content-center"><svg width="36" height="34"><use href="#mail"/></svg></div>
  <div class="cell d-flex align-items-center justify-content-center"><svg width="36" height="36"><rect width="36" height="36" fill="url(#gAsus)"/><path d="M4 27l8-15h4L8 27zM11 27l8-15h4l-8 15zM19 27l8-15h2v11h-3v-3l-3 4z" fill="#e6ecff"/></svg></div>
  <div class="cell d-flex align-items-center justify-content-center"><svg width="36" height="36"><rect width="36" height="36" rx="3" fill="#107c10"/><circle cx="18" cy="18" r="14" fill="#fff"/><path d="M18 11q-5-5-9-4.500M18 11q5-5 9-4.500M18 12Q10 18 7.500 28M18 12q8 6 10.500 16" stroke="#107c10" stroke-width="3" fill="none"/></svg></div>
  <div class="cell d-flex align-items-center justify-content-center"><svg width="33" height="34" viewBox="0 0 33 34"><path fill="url(#gM1)" d="M16 0L3 7Q0 9 0 12v12l9 5V16q0-3 3-5l8-4z"/><path fill="url(#gM2)" d="M16 0l13 7q4 2 4 6v10l-9 3V14q0-2-2-3l-6-4z"/><path fill="url(#gM3)" d="M0 23l9 3 6 3 9-5 9-3q0 4-4 6L17 34 4 28q-4-2-4-5z"/></svg></div>
  <div class="cell now position-relative d-flex align-items-center justify-content-center"><svg width="36" height="36"><use href="#chrome"/></svg><i class="position-absolute"></i></div>
  <div class="cell d-flex align-items-center justify-content-center"><svg width="36" height="32" viewBox="0 0 36 32"><path fill="#1572bc" d="M2 0h32v24H2z"/><path fill="#0b5394" d="M0 23h36v2H0z"/><path fill="#1998dc" d="M7 4h16v28H7z"/><path fill="#41c8f5" d="M7 4h16v12H7z"/><path d="M12 6.500h6" stroke="#0b65a6" stroke-width="1.500"/></svg></div>
  <div class="cell d-flex align-items-center justify-content-center"><svg width="36" height="33"><use href="#ecl"/></svg></div>
  <div class="cell d-flex align-items-center justify-content-center"><svg width="34" height="35"><ellipse cx="17" cy="17.500" rx="12.500" ry="14.500" fill="none" stroke="url(#gOp)" stroke-width="6.500"/></svg></div>
  <div class="cell d-flex align-items-center justify-content-center"><svg width="32" height="33"><circle cx="16" cy="16.500" r="16" fill="#ff6c37"/><circle cx="23" cy="9.500" r="3" fill="#fff"/><path d="M20.500 12L12 21" stroke="#fff" stroke-width="3.600"/><path d="M22 14l-5 6-8 7" stroke="#fff" stroke-width="1.500"/></svg></div>
  <div class="cell position-relative d-flex align-items-center justify-content-center"><svg width="32" height="32"><path fill="#28a5e6" d="M0 0h32v32H0z"/><path fill="#7a80d8" d="M32 14v18H18l4-16 5 2z"/><path fill="#2565b4" d="M14 26l10-11 8 9v8H14z"/><path fill="#153f7c" d="M0 20l9-9 18 21H0z"/><circle cx="21" cy="8" r="3.300" fill="#fff"/></svg><i class="position-absolute"></i></div>
  <div class="cell c62 position-relative d-flex align-items-center justify-content-center"><svg width="36" height="34" viewBox="0 0 36 34"><path fill="#fbfcf8" stroke="#888" stroke-width=".7" d="M2 3h23l3 4-2 26H2z"/><path fill="#a8e06a" d="M4 15q12-6 21 0l-1 15H4z"/><path fill="#4fb81f" d="M4 24q10-4 21 0l-1 6H4z"/><path fill="#2b8a17" d="M6 20q6-7 14-5l-4 4-3 4-7 1zM12 9h8v4h-8z"/><circle cx="14" cy="10" r="2" fill="#fff" stroke="#222"/><circle cx="18" cy="10" r="2" fill="#fff" stroke="#222"/><path d="M5 17h14" stroke="#222" stroke-width="1.200"/><path d="M4 2v4M8 2v4M12 2v4M16 2v4M20 2v4" stroke="#555"/><path d="M34 2l-7 22" stroke="#e8a226" stroke-width="3.400"/><path d="M35 0l-1.300 4" stroke="#c2565e" stroke-width="3.400"/></svg><i class="position-absolute"></i></div>
  <div class="cell c62 position-relative d-flex align-items-center justify-content-center"><svg width="36" height="34" viewBox="0 0 36 34"><path fill="#a9d3ee" stroke="#6593b5" d="M8 11Q18 3 27 8q8 6 3 14-6 9-17 9l1-8-6-1-4 4Q0 19 8 11z"/><circle cx="7" cy="18" r="2.500" fill="#d9463e"/><circle cx="13" cy="13" r="2.700" fill="#58b146"/><circle cx="19" cy="10" r="3" fill="#efb823"/><circle cx="15" cy="20" r="2.300" fill="#d4d6d8" stroke="#6593b5"/><path d="M31 6L19 34" stroke="#d8812b" stroke-width="3"/><path fill="#bd874c" d="M28 1l7-1-1 6-3 5-5-4z"/></svg><i class="position-absolute"></i></div>
  <div class="cell c62 position-relative d-flex align-items-center justify-content-center"><svg width="34" height="34" viewBox="0 0 34 34"><ellipse cx="15" cy="18" rx="14" ry="6" fill="none" stroke="#dc6468" stroke-width="1.300"/><ellipse cx="17" cy="9" rx="14.500" ry="8" fill="#f6f6f8" stroke="#e23a42" stroke-width="1.700" transform="rotate(-14 17 9)"/><path d="M5 12l21 11M16 4l6 20" stroke="#85898f" stroke-width="2.300"/><ellipse cx="28" cy="22" rx="5" ry="3" fill="none" stroke="#1979c4" stroke-width="2.200" transform="rotate(40 28 22)"/><ellipse cx="19.500" cy="28" rx="3" ry="5" fill="none" stroke="#1979c4" stroke-width="2.200"/></svg><i class="position-absolute"></i></div>
  <span data-w="38.500"></span>
  <span data-w="48"><svg width="36" height="32" viewBox="0 0 36 32"><circle cx="18" cy="16" r="15" fill="url(#gSun)"/><path d="M6 6h28M4 11h17M2 19h22M0 25h26" stroke="#f5dfa0" stroke-width="2.600" opacity=".85"/><path d="M14 6v5M24 12v8" stroke="#f9b51b" stroke-width="3"/></svg></span>
  <span data-w="82" data-fit="44" class="temp">33°C</span>
  <span data-w="37"><svg width="18" height="11"><path d="M1 10L9 1l8 9" stroke="#111" stroke-width="1.400" fill="none"/></svg></span>
  <span data-w="32"><svg width="17" height="22" viewBox="0 0 17 22"><path d="M1 6h10v10H1zM11 9.500l5-2.500v9l-5-2.500M3 3q5-3 10 0M3 19q5 3 10 0" stroke="#111" stroke-width="1.200" fill="none"/></svg></span>
  <span data-w="40"><svg width="25" height="17" viewBox="0 0 25 17"><path fill="#eef0f2" stroke="#222" stroke-width="1.300" d="M6 16q-5 0-5-5 0-4 5-4 1-6 7-6 6 0 7 6 4 1 4 4.500 0 4.500-4 4.500z"/><path fill="#888" d="M2 13q-2-5 4-6 1-6 7-6 5 0 6 6l-5 1z"/></svg></span>
  <span data-w="32"><svg width="16" height="24"><rect x="3" y="0" width="10" height="19" rx="2" fill="#000"/><path d="M.8 13v6.500h14V13M8 19v4M4 23.300h8" stroke="#000" stroke-width="1.200" fill="none"/></svg></span>
  <span data-w="36"><svg width="24" height="24"><path d="M1 4l21-3v20l-9 1L1 20z" stroke="#111" stroke-width="1.200" fill="none"/><path d="M7 10q4-4 8 0M15 7v3.500h-3M7 13q3 4 7 1M7 16.500V13h3" stroke="#111" stroke-width="1.200" fill="none"/><circle cx="18.500" cy="18.500" r="5.300" fill="#2b74be"/></svg></span>
  <span data-w="40"><svg width="24" height="17"><path d="M5 4h17v12H5zM23.300 8v4" stroke="#000" stroke-width="1.200" fill="none"/><path fill="#000" d="M7 6h13v8H7z"/><path fill="#d3d4d6" stroke="#000" d="M1 3h5v4q-2.500 3-5 0zM2 0v3M5 0v3M3.500 8v4"/></svg></span>
  <span data-w="33"><svg width="19" height="19"><path d="M1 18Q2 3 18 1M5 18Q6 7 18 5.500M9 18Q10 11 18 10" stroke="#222" stroke-width="1.200" fill="none"/><circle cx="16" cy="16.500" r="1.900" fill="#000"/></svg></span>
  <span data-w="40"><svg width="23" height="20" color="#111"><use href="#vol2"/></svg></span>
  <span data-w="54" data-fit="33">ENG</span>
  <div class="clock" data-w="121"><div class="ps-4"><span data-fit="43">16:10</span></div><span data-fit="92">13-08-2023</span></div>
  <svg class="notif" width="36" height="38" viewBox="0 0 36 38"><path fill="#000" d="M0 1h24v20H14l-5 6v-6H0z"/><path d="M5 6h14M5 10.500h14M5 15h8" stroke="#ddd" stroke-width="1.500"/><circle cx="24" cy="24" r="12" fill="#dadada" stroke="#777" stroke-width="1.200"/><text x="19.500" y="30" font-size="16" font-family="Open Sans" font-weight="600">8</text></svg>
  <div class="tedge"></div>
</div>
<script src="https://cdn.jsdelivr.net/npm/bootstrap@5.3.0/dist/js/bootstrap.bundle.min.js"></script>
<script>
// Slots take their width from data-w; labels are tracked so that they span data-fit pixels.
document.querySelectorAll('[data-w]').forEach(e => { e.style.width = e.dataset.w + 'px'; });
document.querySelectorAll('[data-fit]').forEach(e => {
  const r = document.createRange();
  r.selectNodeContents(e);
  const n = e.textContent.length;
  e.style.letterSpacing = ((e.dataset.fit - r.getBoundingClientRect().width) / n) + 'px';
});
</script>
</body>
</html>
